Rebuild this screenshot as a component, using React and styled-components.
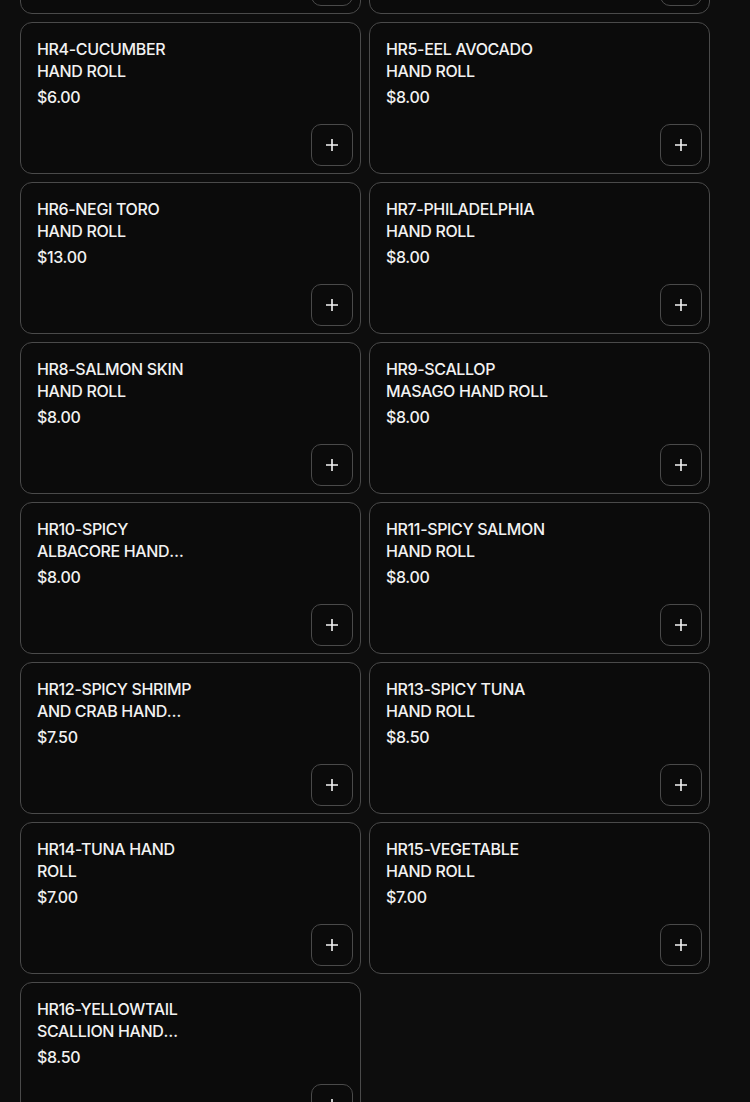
import React from "react";
import styled, { createGlobalStyle } from "styled-components";

const items = [
  { name: "HR2-CALIFORNIA HAND ROLL", price: "$6.00" },
  { name: "HR3-CRAB HAND ROLL", price: "$6.00" },
  { name: "HR4-CUCUMBER HAND ROLL", price: "$6.00" },
  { name: "HR5-EEL AVOCADO HAND ROLL", price: "$8.00" },
  { name: "HR6-NEGI TORO HAND ROLL", price: "$13.00" },
  { name: "HR7-PHILADELPHIA HAND ROLL", price: "$8.00" },
  { name: "HR8-SALMON SKIN HAND ROLL", price: "$8.00" },
  { name: "HR9-SCALLOP MASAGO HAND ROLL", price: "$8.00" },
  { name: "HR10-SPICY ALBACORE HAND ROLL", price: "$8.00" },
  { name: "HR11-SPICY SALMON HAND ROLL", price: "$8.00" },
  { name: "HR12-SPICY SHRIMP AND CRAB HAND ROLL", price: "$7.50" },
  { name: "HR13-SPICY TUNA HAND ROLL", price: "$8.50" },
  { name: "HR14-TUNA HAND ROLL", price: "$7.00" },
  { name: "HR15-VEGETABLE HAND ROLL", price: "$7.00" },
  { name: "HR16-YELLOWTAIL SCALLION HAND ROLL", price: "$8.50" },
];

const GlobalStyle = createGlobalStyle`
  html, body {
    margin: 0;
    padding: 0;
    background: #0d0d0d;
    overflow: hidden;
  }
  body {
    font-family: Inter, "Liberation Sans", sans-serif;
    color: #f2f2f2;
  }
`;

const PlusIcon = () => (
  <svg width="14" height="14" viewBox="0 0 14 14" fill="none">
    <path d="M7 1v12M1 7h12" stroke="#f4f4f4" strokeWidth="1.6" />
  </svg>
);

const App = () => {
  return (
    <>
      <GlobalStyle />
      <Page>
        <MenuGrid>
          {items.map((item, index) => (
            <ItemCard key={index}>
              <ItemInfo>
                <ItemName>{item.name}</ItemName>
                <ItemPrice>{item.price}</ItemPrice>
              </ItemInfo>
              <AddButton aria-label="Add">
                <PlusIcon />
              </AddButton>
            </ItemCard>
          ))}
        </MenuGrid>
      </Page>
    </>
  );
};

export default App;

const Page = styled.div`
  height: 1102px;
  overflow: hidden;
  padding: 0 40px 0 20px;
`;

const MenuGrid = styled.div`
  display: grid;
  grid-template-columns: repeat(2, 341px);
  grid-auto-rows: 152px;
  gap: 8px;
  margin-top: -138px;
`;

const ItemCard = styled.div`
  box-sizing: border-box;
  border: 1px solid #4a4a4a;
  border-radius: 12px;
  background: #0b0b0b;
  padding: 15px 7px 7px 16px;
  display: flex;
  flex-direction: column;
  justify-content: space-between;
`;

const ItemInfo = styled.div`
  display: flex;
  flex-direction: column;
  gap: 4px;
`;

const ItemName = styled.div`
  max-width: 166px;
  font-size: 16px;
  line-height: 22px;
  font-weight: 450;
  letter-spacing: -0.35px;
  display: -webkit-box;
  -webkit-line-clamp: 2;
  -webkit-box-orient: vertical;
  overflow: hidden;
`;

const ItemPrice = styled.div`
  font-size: 16px;
  line-height: 22px;
  font-weight: 450;
  letter-spacing: -0.35px;
`;

const AddButton = styled.button`
  align-self: flex-end;
  width: 42px;
  height: 42px;
  box-sizing: border-box;
  border: 1px solid #4a4a4a;
  border-radius: 10px;
  background: #0b0b0b;
  display: flex;
  align-items: center;
  justify-content: center;
  padding: 0;
  cursor: pointer;
`;
